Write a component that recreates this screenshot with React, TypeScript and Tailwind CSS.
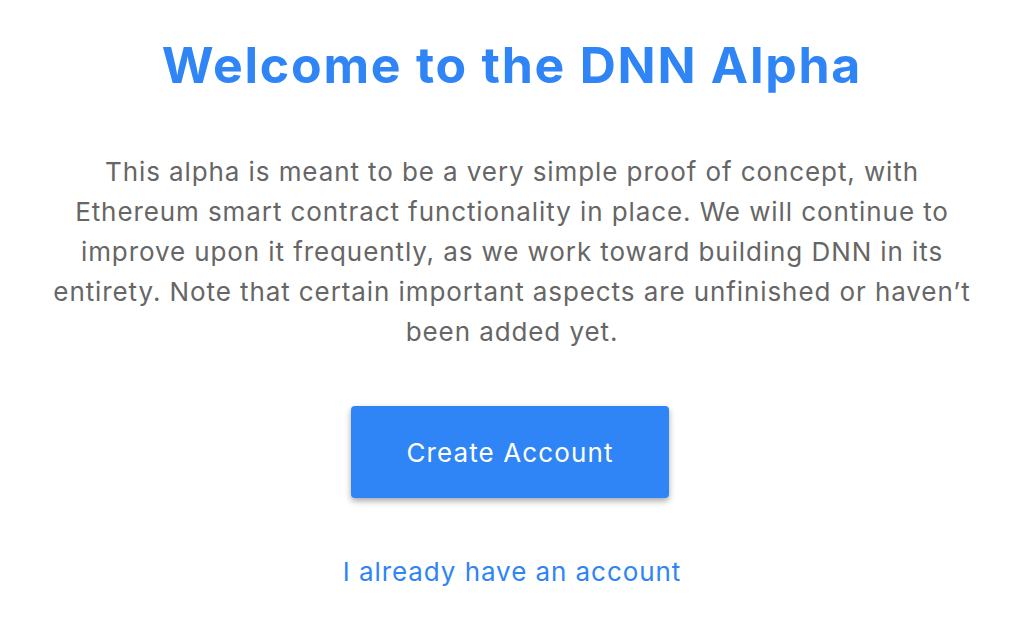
export default function App() {
  return (
    <div className="min-h-[622px] bg-white flex flex-col items-center font-['Inter','Liberation_Sans',Arial,sans-serif]">
      {/* Title */}
      <h1 className="mt-[35px] text-[50px] leading-[60px] font-bold tracking-[0.035em] text-[#2f84f6]">Welcome to the DNN Alpha</h1>

      {/* Intro */}
      <p className="mt-[57px] w-[1000px] text-center text-[26px] leading-[40px] tracking-[0.035em] text-[#666666]">
        This alpha is meant to be a very simple proof of concept, with
        <br />
        Ethereum smart contract functionality in place. We will continue to
        <br />
        improve upon it frequently, as we work toward building DNN in its
        <br />
        entirety. Note that certain important aspects are unfinished or haven’t
        <br />
        been added yet.
      </p>

      {/* Actions */}
      <button className="mt-[54px] mr-[4px] w-[318px] h-[92px] rounded-[4px] bg-[#2f84f6] text-white text-[26px] tracking-[0.043em] shadow-[0_3px_6px_rgba(0,0,0,0.35)]">
        Create Account
      </button>
      <a className="mt-[58px] text-[26px] leading-[32px] tracking-[0.036em] text-[#2f84f6] cursor-pointer">I already have an account</a>
    </div>
  )
}
